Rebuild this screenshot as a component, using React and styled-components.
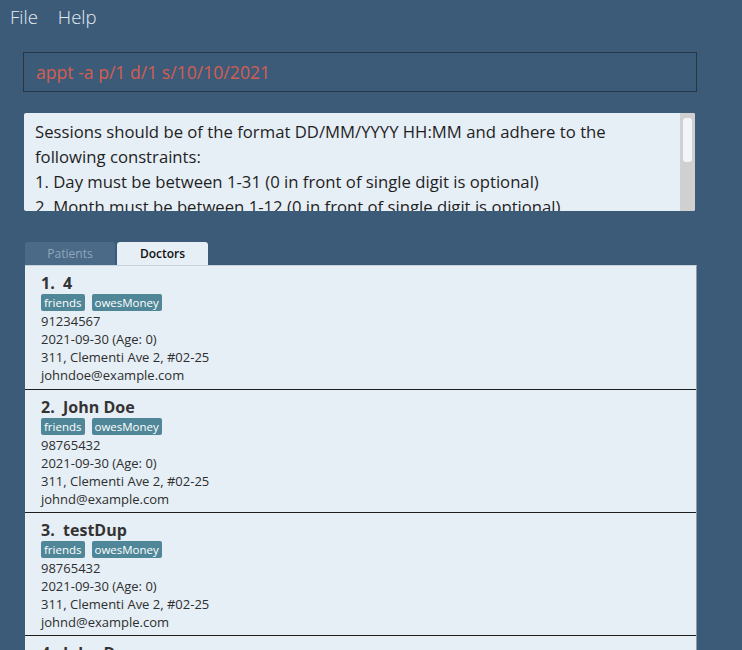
import styled, { createGlobalStyle } from 'styled-components';

const GlobalStyle = createGlobalStyle`
  html, body {
    margin: 0;
    padding: 0;
    background: #3c5b79;
  }
  body {
    font-family: "Open Sans", "Noto Sans", sans-serif;
  }
`;

const Window = styled.div`
  width: 742px;
  height: 650px;
  overflow: hidden;
  background: #3c5b79;
  display: flex;
  flex-direction: column;
`;

const MenuBar = styled.div`
  display: flex;
  gap: 20px;
  height: 32px;
  align-items: center;
  padding-left: 10px;
`;

const MenuItem = styled.span`
  color: #e3eaf1;
  font-size: 18.5px;
  font-weight: 300;
`;

const CommandBox = styled.div`
  margin: 20px 0 0 23px;
  width: 674px;
  height: 40px;
  border: 1px solid #273645;
  box-sizing: border-box;
  display: flex;
  align-items: center;
  padding-left: 12px;
  color: #d45d52;
  font-size: 17.6px;
`;

const ResultBox = styled.div`
  margin: 21px 0 0 24px;
  width: 671px;
  height: 98px;
  background: #e6eef6;
  display: flex;
  border-radius: 2px;
  overflow: hidden;
`;

const ResultText = styled.div`
  flex: 1;
  padding: 6px 0 0 11px;
  font-size: 16.7px;
  line-height: 25px;
  color: #1f1f1f;
  white-space: nowrap;
`;

const ScrollTrack = styled.div`
  width: 15px;
  background: #d0d0d0;
  display: flex;
  justify-content: center;
  padding-top: 5px;
`;

const ScrollThumb = styled.div`
  width: 9px;
  height: 44px;
  border-radius: 3px;
  background: #f1f4f8;
`;

const TabRow = styled.div`
  display: flex;
  gap: 2px;
  margin: 31px 0 0 25px;
  height: 23px;
`;

const Tab = styled.div`
  width: ${p => p.$w}px;
  border-radius: 3px 3px 0 0;
  display: flex;
  align-items: center;
  justify-content: center;
  font-size: 12px;
  font-weight: ${p => (p.$active ? 600 : 400)};
  background: ${p => (p.$active ? '#e6eef6' : '#4b6a88')};
  color: ${p => (p.$active ? '#111' : '#90a6ba')};
`;

const ListPanel = styled.div`
  margin-left: 25px;
  width: 672px;
  flex: 1;
  background: #e6eef6;
  border-top: 1px solid #c9d3dc;
  border-right: 1px solid #8e9aa5;
  box-sizing: border-box;
  overflow: hidden;
`;

const Card = styled.div`
  padding: 7px 0 4px 16px;
  border-bottom: 1px solid #1e1e1e;
  color: #333;

  &:first-child {
    padding-bottom: 5px;
  }
`;

const Title = styled.div`
  font-size: 16px;
  font-weight: 700;
  line-height: 20px;
  color: #333;
  white-space: pre;
`;

const TagRow = styled.div`
  display: flex;
  gap: 7px;
  height: 19px;
  padding-top: 1px;
  box-sizing: border-box;
  align-items: flex-start;
`;

const Tag = styled.span`
  background: #4f8798;
  color: #fff;
  font-size: 11.5px;
  line-height: 17px;
  padding: 0 3px;
  border-radius: 2px;
`;

const Field = styled.div`
  font-size: 13px;
  line-height: 18px;
  color: #2e2e2e;
`;

const people = [
  { name: '4', phone: '91234567', email: 'johndoe@example.com' },
  { name: 'John Doe', phone: '98765432', email: 'johnd@example.com' },
  { name: 'testDup', phone: '98765432', email: 'johnd@example.com' },
  { name: 'John Doe', phone: '98765432', email: 'johnd@example.com' },
];

export default function App() {
  return (
    <Window>
      <GlobalStyle />
      <MenuBar>
        <MenuItem>File</MenuItem>
        <MenuItem>Help</MenuItem>
      </MenuBar>
      <CommandBox>appt -a p/1 d/1 s/10/10/2021</CommandBox>
      <ResultBox>
        <ResultText>
          Sessions should be of the format DD/MM/YYYY HH:MM and adhere to the
          <br />
          following constraints:
          <br />
          1. Day must be between 1-31 (0 in front of single digit is optional)
          <br />
          2. Month must be between 1-12 (0 in front of single digit is optional)
        </ResultText>
        <ScrollTrack>
          <ScrollThumb />
        </ScrollTrack>
      </ResultBox>
      <TabRow>
        <Tab $w={90}>Patients</Tab>
        <Tab $w={91} $active>Doctors</Tab>
      </TabRow>
      <ListPanel>
        {people.map((p, i) => (
          <Card key={i}>
            <Title>{`${i + 1}.  ${p.name}`}</Title>
            <TagRow>
              <Tag>friends</Tag>
              <Tag>owesMoney</Tag>
            </TagRow>
            <Field>{p.phone}</Field>
            <Field>2021-09-30 (Age: 0)</Field>
            <Field>311, Clementi Ave 2, #02-25</Field>
            <Field>{p.email}</Field>
          </Card>
        ))}
      </ListPanel>
    </Window>
  );
}
